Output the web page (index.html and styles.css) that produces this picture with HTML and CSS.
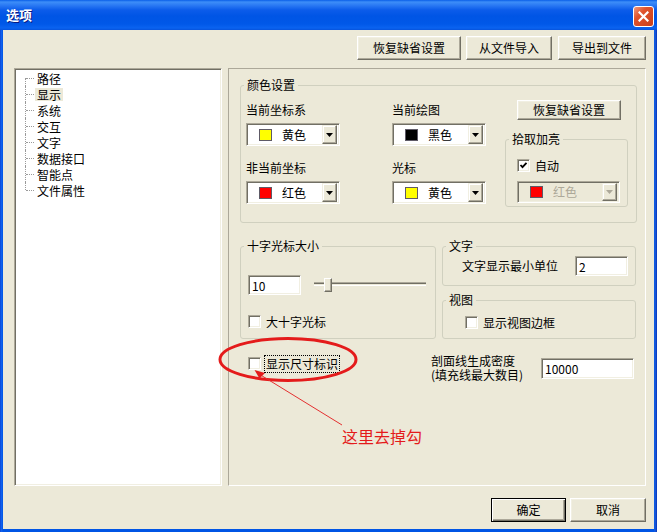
FILE: index.html
```html
<!DOCTYPE html>
<html lang="zh-CN">
<head>
    <meta charset="UTF-8">
    <title>选项</title>
    <link rel="stylesheet" href="styles.css">
</head>
<body>

<div class="window">
    <div class="titlebar">
        <span class="title">选项</span>
        <span class="close-btn">
            <svg width="11" height="11" viewBox="0 0 11 11"><path d="M1.5 1.5L9.5 9.5M9.5 1.5L1.5 9.5" stroke="#fff" stroke-width="2.2" stroke-linecap="square"/></svg>
        </span>
    </div>

    <div class="client">
        <div class="toolbar">
            <button class="btn btn-restore">恢复缺省设置</button>
            <button class="btn btn-import">从文件导入</button>
            <button class="btn btn-export">导出到文件</button>
        </div>

        <div class="main">
            <ul class="tree">
                <li><span>路径</span></li>
                <li class="selected"><span>显示</span></li>
                <li><span>系统</span></li>
                <li><span>交互</span></li>
                <li><span>文字</span></li>
                <li><span>数据接口</span></li>
                <li><span>智能点</span></li>
                <li><span>文件属性</span></li>
            </ul>

            <div class="panel">
                <!-- colour settings -->
                <fieldset class="group color-group">
                    <legend>颜色设置</legend>
                    <div class="color-body">
                        <div class="color-col">
                            <div class="field-label">当前坐标系</div>
                            <div class="combo">
                                <span class="swatch yellow"></span>
                                <span class="combo-text">黄色</span>
                                <span class="combo-btn"><svg width="7" height="4" viewBox="0 0 7 4"><polygon points="0,0 7,0 3.5,4" fill="#000"/></svg></span>
                            </div>
                            <div class="field-label second">非当前坐标</div>
                            <div class="combo">
                                <span class="swatch red"></span>
                                <span class="combo-text">红色</span>
                                <span class="combo-btn"><svg width="7" height="4" viewBox="0 0 7 4"><polygon points="0,0 7,0 3.5,4" fill="#000"/></svg></span>
                            </div>
                        </div>
                        <div class="color-col col2">
                            <div class="field-label">当前绘图</div>
                            <div class="combo">
                                <span class="swatch black"></span>
                                <span class="combo-text">黑色</span>
                                <span class="combo-btn"><svg width="7" height="4" viewBox="0 0 7 4"><polygon points="0,0 7,0 3.5,4" fill="#000"/></svg></span>
                            </div>
                            <div class="field-label second">光标</div>
                            <div class="combo">
                                <span class="swatch yellow"></span>
                                <span class="combo-text">黄色</span>
                                <span class="combo-btn"><svg width="7" height="4" viewBox="0 0 7 4"><polygon points="0,0 7,0 3.5,4" fill="#000"/></svg></span>
                            </div>
                        </div>
                        <div class="color-col col3">
                            <button class="btn btn-small">恢复缺省设置</button>
                            <fieldset class="group pick-group">
                                <legend>拾取加亮</legend>
                                <div class="pick-body">
                                    <label class="check">
                                        <span class="box"><svg width="9" height="9" viewBox="0 0 9 9"><polyline points="1.5,4 3.5,6.2 7.5,1.8" fill="none" stroke="#000" stroke-width="1.8"/></svg></span>
                                        <span class="check-text">自动</span>
                                    </label>
                                    <div class="combo combo-disabled">
                                        <span class="swatch red"></span>
                                        <span class="combo-text">红色</span>
                                        <span class="combo-btn"><svg width="7" height="4" viewBox="0 0 7 4"><polygon points="0,0 7,0 3.5,4" fill="#ACA899"/></svg></span>
                                    </div>
                                </div>
                            </fieldset>
                        </div>
                    </div>
                </fieldset>

                <div class="row2">
                    <fieldset class="group cross-group">
                        <legend>十字光标大小</legend>
                        <div class="cross-body">
                            <div class="cross-row">
                                <div class="textbox num">10</div>
                                <div class="slider">
                                    <span class="track"></span>
                                    <span class="thumb"></span>
                                </div>
                            </div>
                            <label class="check big-cross">
                                <span class="box"></span>
                                <span class="check-text">大十字光标</span>
                            </label>
                        </div>
                    </fieldset>

                    <div class="right-col">
                        <fieldset class="group text-group">
                            <legend>文字</legend>
                            <div class="text-body">
                                <span class="text-label">文字显示最小单位</span>
                                <div class="textbox num">2</div>
                            </div>
                        </fieldset>
                        <fieldset class="group view-group">
                            <legend>视图</legend>
                            <div class="view-body">
                                <label class="check">
                                    <span class="box"></span>
                                    <span class="check-text">显示视图边框</span>
                                </label>
                            </div>
                        </fieldset>
                    </div>
                </div>

                <div class="row3">
                    <div class="dim-check">
                        <label class="check">
                            <span class="box"></span>
                            <span class="check-text focused">显示尺寸标识</span>
                        </label>
                    </div>
                    <div class="density-label">
                        <div>剖面线生成密度</div>
                        <div>(填充线最大数目)</div>
                    </div>
                    <div class="textbox density">10000</div>
                </div>
            </div>
        </div>

        <div class="footer">
            <button class="btn btn-ok">确定</button>
            <button class="btn btn-cancel">取消</button>
        </div>
    </div>

    <!-- red annotation drawn over the dialog -->
    <svg class="annotation" width="657" height="532" viewBox="0 0 657 532">
        <ellipse cx="288" cy="359.5" rx="68" ry="21" fill="none" stroke="#E41B1B" stroke-width="3"/>
        <line x1="259" y1="374" x2="342" y2="425" stroke="#E43030" stroke-width="1"/>
        <polygon points="254.5,370 265,373 259.5,378.5" fill="#E41B1B"/>
    </svg>
    <div class="note">这里去掉勾</div>
</div>

</body>
</html>
```

FILE: styles.css
```css
* {
    box-sizing: border-box;
}
body {
    margin: 0;
    font-family: "Noto Sans CJK SC", "Liberation Sans", sans-serif;
    font-size: 12px;
    line-height: 14px;
    color: #000;
}
.window {
    position: relative;
    width: 657px;
    height: 532px;
    display: flex;
    flex-direction: column;
    background: linear-gradient(to right, #0838C8 0, #1665F0 1px, #0055E5 3px, #0055E5 654px, #1A5FE0 655px, #0733B8 657px);
}

/* Title bar */
.titlebar {
    height: 30px;
    display: flex;
    align-items: flex-start;
    padding: 0 3px 0 6px;
    background: linear-gradient(to bottom, #0A5FE8 0, #3D8EF8 2px, #2C7BF4 5px, #0C5CEA 10px, #0055E5 16px, #0058E8 24px, #0A63F0 28px, #0653DC 30px);
}
.title {
    flex: 1;
    margin-top: 7px;
    color: #fff;
    font-size: 13px;
    font-weight: bold;
    line-height: 16px;
    text-shadow: 1px 1px #0A1A80;
}
.close-btn {
    width: 21px;
    height: 21px;
    margin-top: 6px;
    display: flex;
    align-items: center;
    justify-content: center;
    border: 1px solid #fff;
    border-radius: 3px;
    background: linear-gradient(135deg, #F09A7C 0%, #E0522C 35%, #C8401C 100%);
}

/* Client area */
.client {
    flex: 1;
    margin: 0 3px 3px 3px;
    padding: 6px 8px 0 11px;
    background: #ECE9D8;
    display: flex;
    flex-direction: column;
}
.toolbar {
    display: flex;
    justify-content: flex-end;
    gap: 6px;
}
.btn {
    height: 24px;
    padding: 0;
    font: inherit;
    color: #000;
    background: #ECE9D8;
    border: 1px solid;
    border-color: #fff #716F64 #716F64 #fff;
    box-shadow: inset -1px -1px #ACA899, inset 1px 1px #F1EFE2;
}
.btn-restore { width: 104px; margin-right: -1px; }
.btn-import { width: 86px; }
.btn-export { width: 88px; }

.main {
    display: flex;
    gap: 6px;
    margin-top: 8px;
    height: 418px;
}

/* Tree */
.tree {
    width: 208px;
    margin: 0;
    padding: 0;
    list-style: none;
    background: #fff;
    border: 1px solid;
    border-color: #ACA899 #fff #fff #ACA899;
    box-shadow: inset 1px 1px #716F64, inset -1px -1px #F1EFE2;
    padding-left: 1px;
    padding-top: 1px;
}
.tree li {
    position: relative;
    height: 16px;
    display: flex;
    align-items: center;
    padding-left: 19px;
}
.tree li::before {
    content: "";
    position: absolute;
    left: 9px;
    top: 0;
    bottom: 0;
    border-left: 1px dotted #9A9A9A;
}
.tree li:first-child::before { top: 8px; }
.tree li:last-child::before { bottom: 8px; }
.tree li::after {
    content: "";
    position: absolute;
    left: 10px;
    top: 8px;
    width: 8px;
    border-top: 1px dotted #9A9A9A;
}
.tree li span {
    padding: 0 2px;
    line-height: 13px;
}
.tree li.selected span {
    background: #ECE9D8;
}

/* Right panel */
.panel {
    flex: 1;
    border: 1px solid;
    border-color: #ACA899 #fff #fff #ACA899;
    padding: 9px 8px 0 11px;
}
fieldset.group {
    margin: 0;
    padding: 0;
    min-width: 0;
    border: 1px solid #D0D0BF;
    border-radius: 3px;
}
fieldset.group legend {
    padding: 0 3px;
    margin-left: 3px;
    line-height: 14px;
}

.color-body {
    display: flex;
    padding: 11px 8px 15px 5px;
}
.color-col {
    width: 94px;
}
.color-col.col2 {
    margin-left: 52px;
}
.color-col.col3 {
    width: 123px;
    margin-left: 19px;
    margin-top: -3px;
}
.field-label {
    height: 14px;
}
.field-label.second {
    margin-top: 15px;
}

/* Colour combobox */
.combo {
    display: flex;
    align-items: center;
    height: 23px;
    margin-top: 6px;
    background: #fff;
    border: 1px solid;
    border-color: #ACA899 #fff #fff #ACA899;
    box-shadow: inset 1px 1px #716F64, inset -1px -1px #F1EFE2;
    padding: 0 2px 0 0;
}
.swatch {
    width: 13px;
    height: 12px;
    margin-left: 12px;
    border: 1px solid #5E5A66;
}
.swatch.yellow { background: #FFFF00; }
.swatch.red { background: #FF0000; }
.swatch.black { background: #000; }
.combo-text {
    margin-left: 10px;
}
.combo-btn {
    margin-left: auto;
    width: 15px;
    height: 19px;
    display: flex;
    align-items: center;
    justify-content: center;
    background: #ECE9D8;
    border: 1px solid;
    border-color: #F1EFE2 #716F64 #716F64 #F1EFE2;
    box-shadow: inset -1px -1px #ACA899, inset 1px 1px #fff;
}
.combo-disabled {
    background: #ECE9D8;
    color: #ACA899;
    height: 22px;
    width: 103px;
    margin-top: 9px;
}
.combo-disabled .combo-btn {
    height: 18px;
}

.btn-small {
    width: 104px;
    height: 20px;
    margin-left: 12px;
}
.pick-group {
    margin-top: 12px !important;
}
.pick-body {
    padding: 13px 0 3px 11px;
}

/* Checkboxes */
.check {
    display: flex;
    align-items: center;
    height: 13px;
}
.box {
    width: 13px;
    height: 13px;
    display: flex;
    align-items: center;
    justify-content: center;
    background: #fff;
    border: 1px solid;
    border-color: #ACA899 #fff #fff #ACA899;
    box-shadow: inset 1px 1px #716F64, inset -1px -1px #F1EFE2;
}
.check-text {
    margin-left: 5px;
}
.check-text.focused {
    margin-left: 4px;
    padding: 1px 1px;
    outline: 1px dotted #000;
}

/* Second row */
.row2 {
    display: flex;
    margin-top: 16px;
}
.cross-group {
    width: 196px;
}
.cross-body {
    padding: 22px 0 10px 7px;
}
.cross-row {
    display: flex;
    align-items: center;
    height: 20px;
}
.textbox {
    height: 20px;
    padding: 3px 0 0 3px;
    background: #fff;
    border: 1px solid;
    border-color: #ACA899 #fff #fff #ACA899;
    box-shadow: inset 1px 1px #716F64, inset -1px -1px #F1EFE2;
}
.textbox.num {
    width: 53px;
}
.slider {
    position: relative;
    width: 112px;
    height: 20px;
    margin-left: 13px;
}
.track {
    position: absolute;
    left: 0;
    right: 0;
    top: 7px;
    height: 4px;
    border-top: 1px solid #ACA899;
    border-bottom: 1px solid #fff;
    box-shadow: inset 0 1px #716F64;
}
.thumb {
    position: absolute;
    left: 10px;
    top: 3px;
    width: 8px;
    height: 14px;
    background: #ECE9D8;
    border: 1px solid;
    border-color: #fff #716F64 #716F64 #fff;
    box-shadow: inset -1px -1px #ACA899;
}
.big-cross {
    margin-top: 20px;
}

.right-col {
    width: 194px;
    margin-left: 6px;
    display: flex;
    flex-direction: column;
}
.text-body {
    display: flex;
    align-items: center;
    padding: 3px 7px 9px 19px;
}
.text-label {
    flex: 1;
}
.view-group {
    margin-top: 7px !important;
}
.view-body {
    padding: 9px 0 9px 22px;
}

/* Third row */
.row3 {
    display: flex;
    margin-top: 16px;
}
.dim-check {
    width: 191px;
    padding: 2px 0 0 8px;
}
.density-label {
    width: 110px;
    margin-top: -2px;
    line-height: 16px;
    white-space: nowrap;
}
.density-label div {
    height: 14px;
}
.textbox.density {
    width: 93px;
    height: 21px;
    margin-top: 3px;
}

/* Footer */
.footer {
    display: flex;
    justify-content: flex-end;
    gap: 4px;
    margin-top: 12px;
}
.btn-ok {
    width: 75px;
    border: 1px solid #000;
    box-shadow: inset 1px 1px #fff, inset -1px -1px #716F64, inset -2px -2px #ACA899;
}
.btn-cancel {
    width: 76px;
}

/* Annotation */
.annotation {
    position: absolute;
    left: 0;
    top: 0;
    pointer-events: none;
}
.note {
    position: absolute;
    left: 342px;
    top: 426px;
    color: #E41B1B;
    font-size: 16px;
    line-height: 20px;
}
```
